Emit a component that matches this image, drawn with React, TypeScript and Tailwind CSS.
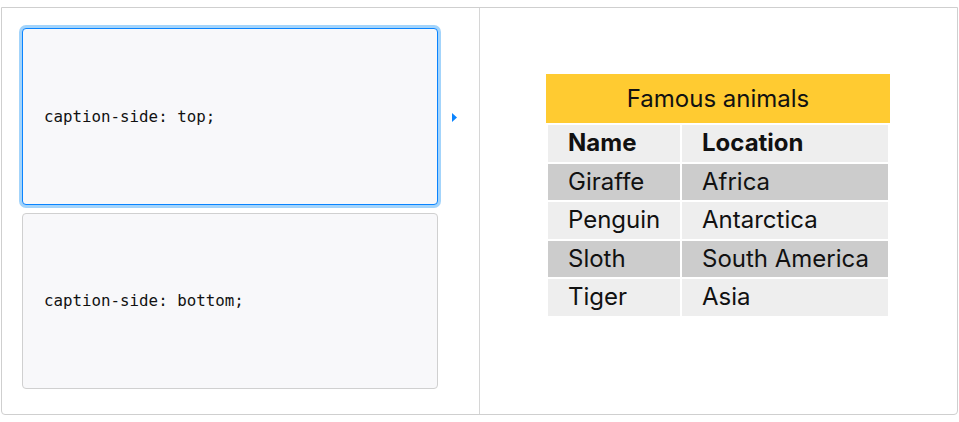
import React from 'react';

const animals = [
  { name: 'Giraffe', location: 'Africa' },
  { name: 'Penguin', location: 'Antarctica' },
  { name: 'Sloth', location: 'South America' },
  { name: 'Tiger', location: 'Asia' },
];

const choices = [
  { code: 'caption-side: top;', selected: true },
  { code: 'caption-side: bottom;', selected: false },
];

export default function App() {
  return (
    <div className="w-[959px] h-[422px] bg-white pt-[7px] pl-[1px]">
      <div className="flex w-[957px] h-[408px] border border-[#cfcfcf] rounded-b-[4px]">
        {/* choices */}
        <div className="flex w-[478px] border-r border-[#d6d6d6] pl-[20px] pt-[20px]">
          <div className="flex flex-col gap-[8px] w-[416px]">
            {choices.map((c) => (
              <div
                key={c.code}
                className={
                  c.selected
                    ? 'flex items-center h-[177px] pl-[21px] bg-[#f8f8fa] border border-[#0a84ff] rounded-[4px] ring-[3px] ring-[#a3d4fb]'
                    : 'flex items-center h-[176px] pl-[21px] bg-[#f8f8fa] border border-[#d0d0d0] rounded-[4px]'
                }
              >
                <code className="text-[15.8px] text-[#111] font-['DejaVu_Sans_Mono',monospace]">{c.code}</code>
              </div>
            ))}
          </div>
          <div className="flex items-start pt-[85px] pl-[14px]">
            <svg width="5" height="9" viewBox="0 0 5 9">
              <path d="M0 0 L5 4.5 L0 9 Z" fill="#0a84ff" />
            </svg>
          </div>
        </div>

        {/* output */}
        <div className="flex-1 flex justify-start items-start pl-[66px] pt-[66px] font-['Inter',sans-serif] text-[#111]">
          <table className="border-separate border-spacing-[2px] text-[24px] leading-[28px]">
            <caption className="bg-[#ffcb31] py-[10.5px] text-center">Famous animals</caption>
            <thead>
              <tr className="bg-[#eeeeee]">
                <th className="w-[132px] text-left font-bold pl-[20px] py-[4.25px]">Name</th>
                <th className="w-[206px] text-left font-bold pl-[20px] py-[4.25px]">Location</th>
              </tr>
            </thead>
            <tbody>
              {animals.map((a, i) => (
                <tr key={a.name} className={i % 2 === 0 ? 'bg-[#cccccc]' : 'bg-[#eeeeee]'}>
                  <td className="pl-[20px] py-[4.25px]">{a.name}</td>
                  <td className="pl-[20px] py-[4.25px]">{a.location}</td>
                </tr>
              ))}
            </tbody>
          </table>
        </div>
      </div>
    </div>
  );
}
